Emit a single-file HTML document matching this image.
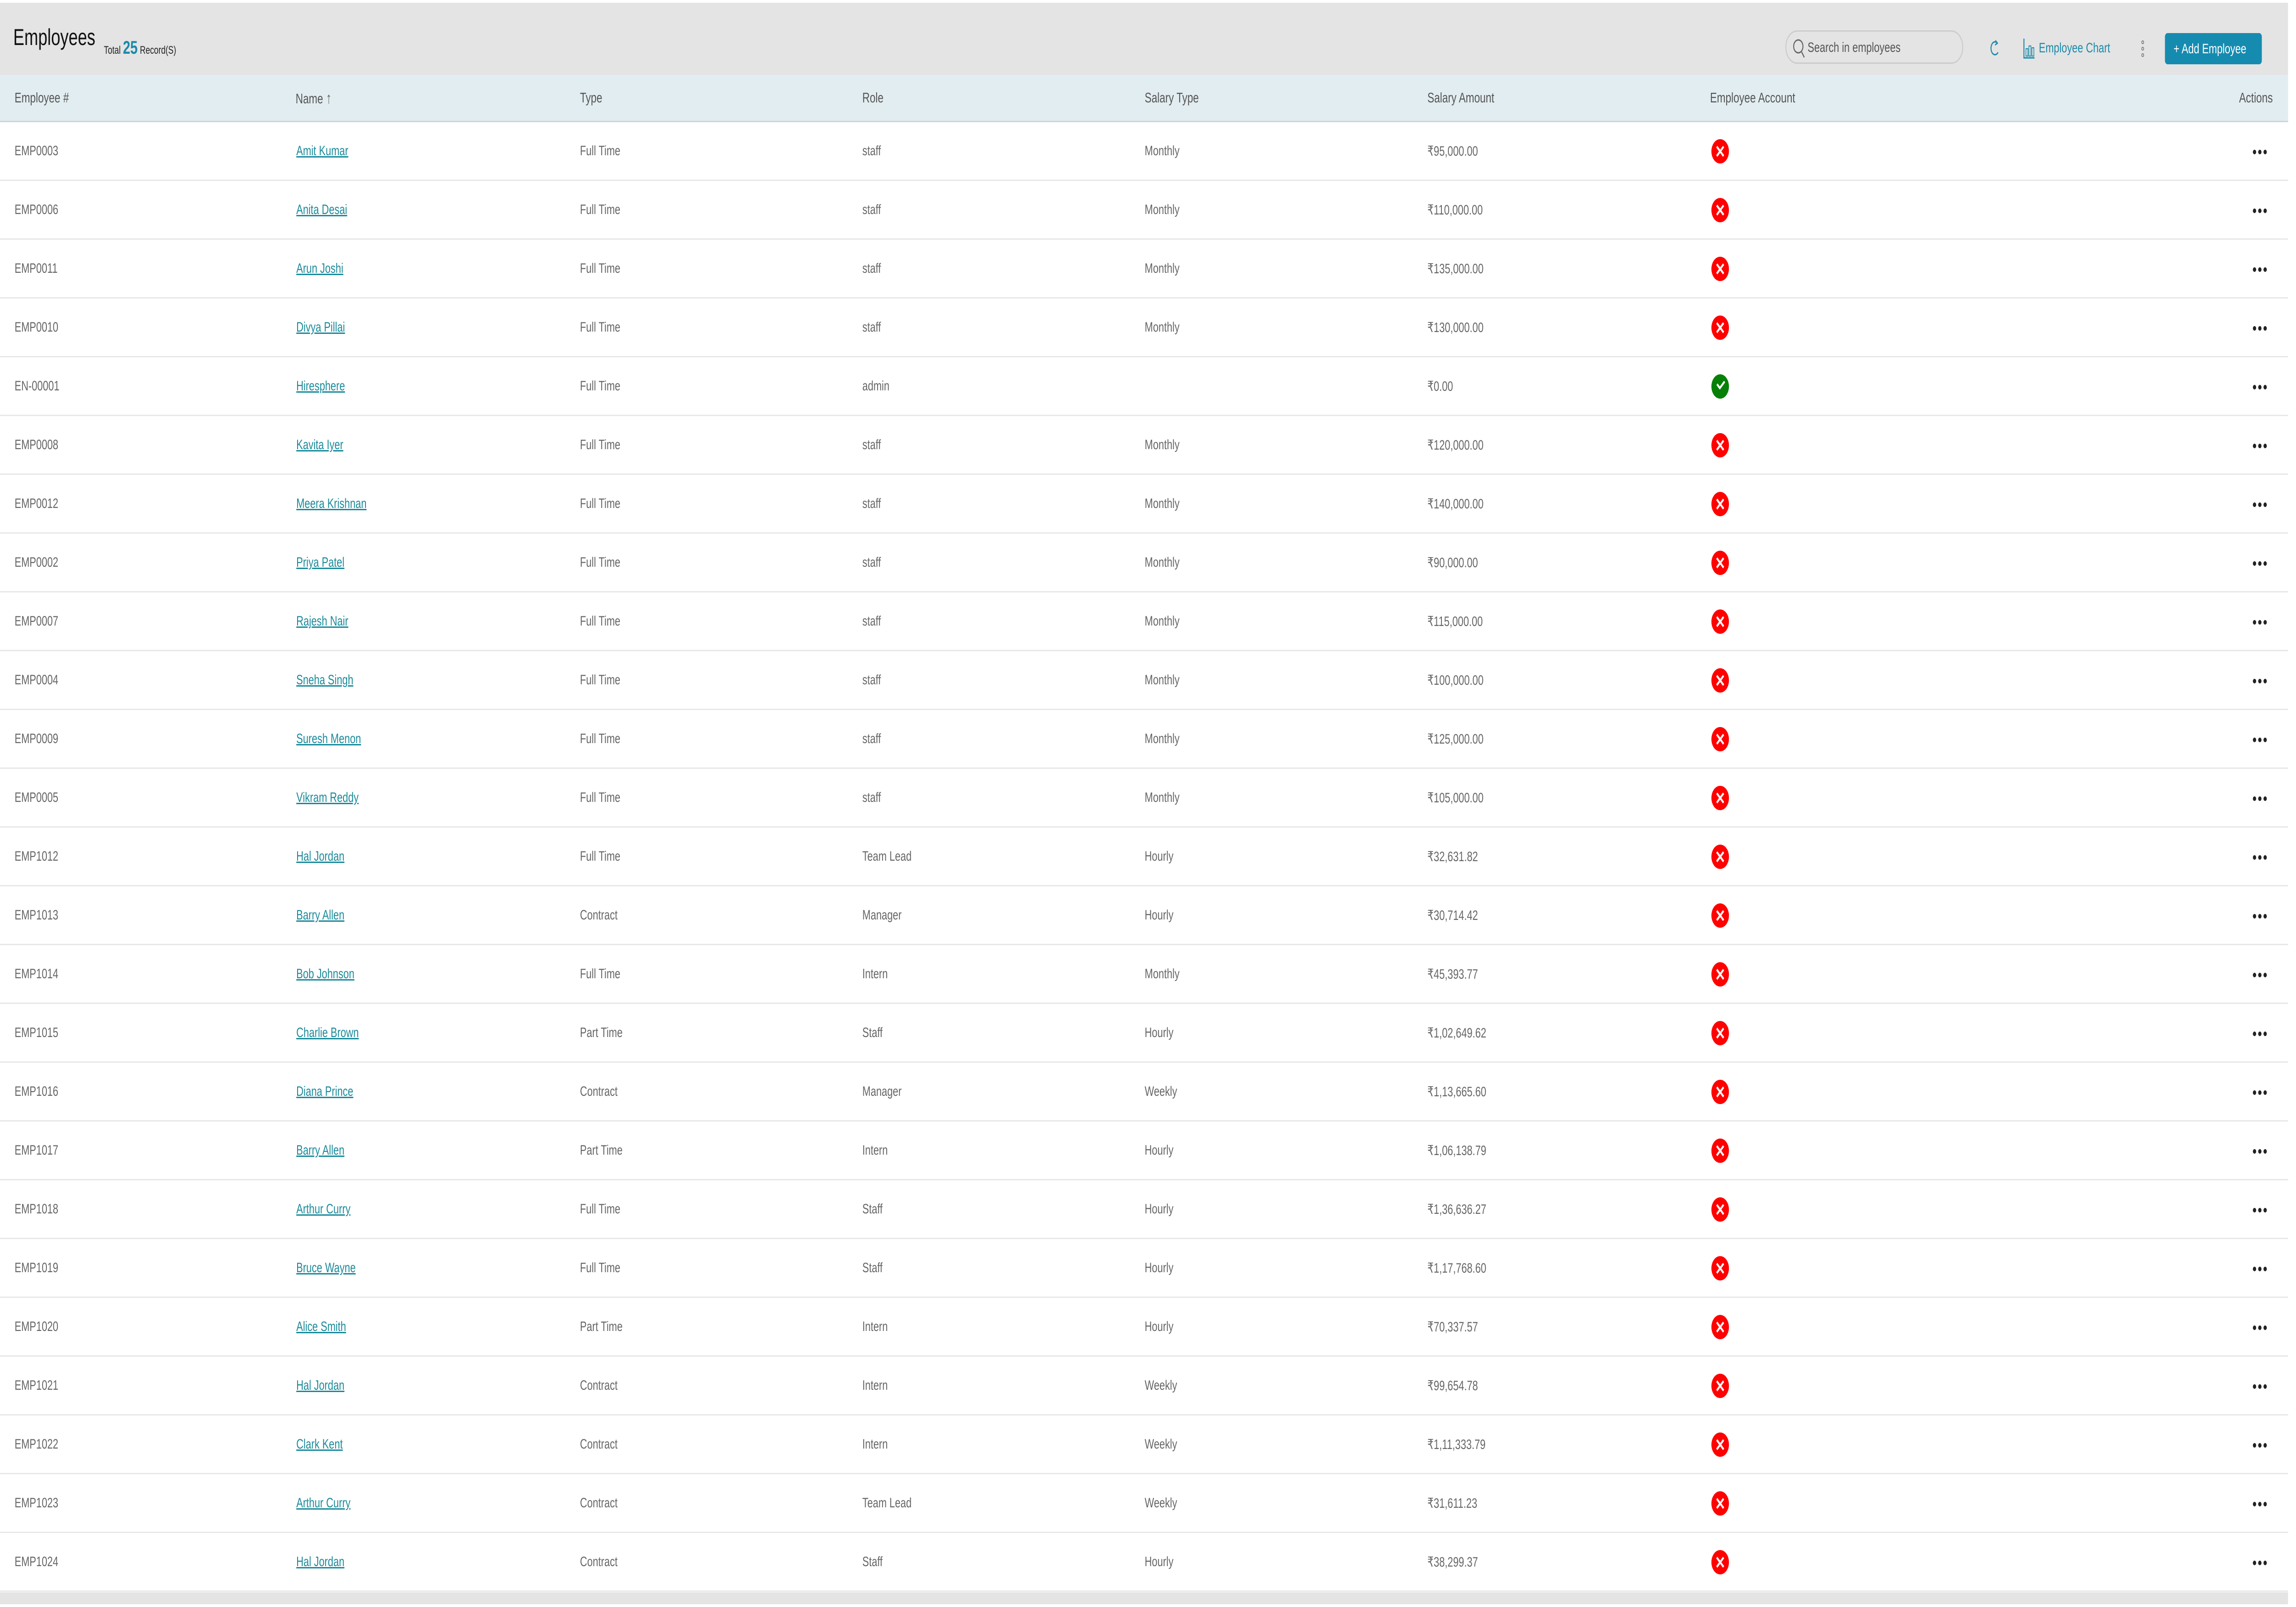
<!DOCTYPE html>
<html><head><meta charset="utf-8"><style>
*{margin:0;padding:0;box-sizing:border-box}
html,body{margin:0;overflow:hidden;background:#fff}
#w{width:6920px;height:3499px;background:#fff;font-family:"Liberation Sans",sans-serif;position:relative;overflow:hidden;transform-origin:0 0}
.hdr{position:absolute;left:0;top:6px;width:6896px;height:157px;background:#e4e4e4}
.title{position:absolute;left:40px;top:46px;font-size:50px;color:#111}
.tot{position:absolute;left:313px;top:76px;font-size:24px;color:#222}
.tot b{font-size:40px;color:#1a8aa8;font-weight:bold}
.search{position:absolute;left:5381px;top:60px;width:536px;height:73px;border:3px solid #ccc;border-radius:36px;font-size:30px;color:#555;padding:18px 0 0 64px}
.btn{position:absolute;left:6525px;top:66px;width:292px;height:68px;background:#168bb0;border-radius:8px;color:#fff;font-size:30px;padding:18px 0 0 26px}
.chart{position:absolute;left:6145px;top:82px;font-size:30px;color:#1a8aa8}
.th{position:absolute;left:0;top:163px;width:6896px;height:103px;background:#e2edf1;border-bottom:3px solid #cdd5da}
.th span{position:absolute;top:32px;font-size:31px;color:#555}
.row{position:absolute;left:0;width:6896px;height:128px;border-bottom:3px solid #e8e8e8;background:#fff}
.row span{position:absolute;top:46px;font-size:30px;color:#666}
.row .n{color:#1a8a9a;text-decoration:underline}
.x{position:absolute;left:5158px;top:37px;width:53px;height:53px;border-radius:50%;background:#f00}
.x:before,.x:after{content:"";position:absolute;left:24px;top:12px;width:5px;height:29px;background:#fff;transform:rotate(45deg)}
.x:after{transform:rotate(-45deg)}
.ok{background:#078007}
.ok:before{left:15px;top:24px;width:14px;height:5px;transform:rotate(45deg)}
.ok:after{left:21px;top:21px;width:22px;height:5px;transform:rotate(-45deg)}
.d{position:absolute;left:6790px;top:60px;width:42px;height:10px}
.d i{position:absolute;top:0;width:10px;height:10px;border-radius:50%;background:#222}
.foot{position:absolute;left:0;top:3467px;width:6896px;height:26px;background:#e4e4e4}
</style></head><body>
<div id="w">
<div class="hdr">
<div class="title">Employees</div>
<div class="tot">Total <b>25</b> Record(S)</div>
<div class="search"><svg style="position:absolute;left:18px;top:14px" width="40" height="46" viewBox="0 0 40 46"><circle cx="18" cy="18" r="14" fill="none" stroke="#666" stroke-width="3"/><line x1="28" y1="30" x2="36" y2="42" stroke="#666" stroke-width="3"/></svg>Search in employees</div>
<svg style="position:absolute;left:5998px;top:78px" width="30" height="44" viewBox="0 0 30 44"><path d="M22 10 A12 14 0 1 0 24 30" fill="none" stroke="#1a8aa8" stroke-width="3"/><path d="M16 4 L22 10 L15 14" fill="none" stroke="#1a8aa8" stroke-width="3"/></svg>
<svg style="position:absolute;left:6098px;top:78px" width="36" height="44" viewBox="0 0 36 44"><path d="M2 0 V42 H34" fill="none" stroke="#1a8aa8" stroke-width="3"/><rect x="8" y="22" width="6" height="16" fill="none" stroke="#1a8aa8" stroke-width="2"/><rect x="17" y="16" width="6" height="22" fill="none" stroke="#1a8aa8" stroke-width="2"/><rect x="26" y="20" width="6" height="18" fill="none" stroke="#1a8aa8" stroke-width="2"/></svg>
<div class="chart">Employee Chart</div>
<svg style="position:absolute;left:6452px;top:80px" width="12" height="40" viewBox="0 0 12 40"><circle cx="6" cy="6" r="3" fill="none" stroke="#777" stroke-width="2"/><circle cx="6" cy="20" r="3" fill="none" stroke="#777" stroke-width="2"/><circle cx="6" cy="34" r="3" fill="none" stroke="#777" stroke-width="2"/></svg>
<div class="btn">+ Add Employee</div>
</div>
<div class="th">
<span style="left:44px">Employee #</span>
<span style="left:891px">Name <b style="font-size:34px;color:#666">&#8593;</b></span>
<span style="left:1748px">Type</span>
<span style="left:2599px">Role</span>
<span style="left:3450px">Salary Type</span>
<span style="left:4302px">Salary Amount</span>
<span style="left:5154px">Employee Account</span>
<span style="right:46px">Actions</span>
</div>

<div class="row" style="top:266px"><span style="left:44px">EMP0003</span><span class="n" style="left:893px">Amit Kumar</span><span style="left:1748px">Full Time</span><span style="left:2599px">staff</span><span style="left:3450px">Monthly</span><span style="left:4302px">₹95,000.00</span><div class="x"></div><div class="d"><i style="left:0"></i><i style="left:16px"></i><i style="left:32px"></i></div></div>
<div class="row" style="top:394px"><span style="left:44px">EMP0006</span><span class="n" style="left:893px">Anita Desai</span><span style="left:1748px">Full Time</span><span style="left:2599px">staff</span><span style="left:3450px">Monthly</span><span style="left:4302px">₹110,000.00</span><div class="x"></div><div class="d"><i style="left:0"></i><i style="left:16px"></i><i style="left:32px"></i></div></div>
<div class="row" style="top:522px"><span style="left:44px">EMP0011</span><span class="n" style="left:893px">Arun Joshi</span><span style="left:1748px">Full Time</span><span style="left:2599px">staff</span><span style="left:3450px">Monthly</span><span style="left:4302px">₹135,000.00</span><div class="x"></div><div class="d"><i style="left:0"></i><i style="left:16px"></i><i style="left:32px"></i></div></div>
<div class="row" style="top:650px"><span style="left:44px">EMP0010</span><span class="n" style="left:893px">Divya Pillai</span><span style="left:1748px">Full Time</span><span style="left:2599px">staff</span><span style="left:3450px">Monthly</span><span style="left:4302px">₹130,000.00</span><div class="x"></div><div class="d"><i style="left:0"></i><i style="left:16px"></i><i style="left:32px"></i></div></div>
<div class="row" style="top:778px"><span style="left:44px">EN-00001</span><span class="n" style="left:893px">Hiresphere</span><span style="left:1748px">Full Time</span><span style="left:2599px">admin</span><span style="left:3450px"></span><span style="left:4302px">₹0.00</span><div class="x ok"></div><div class="d"><i style="left:0"></i><i style="left:16px"></i><i style="left:32px"></i></div></div>
<div class="row" style="top:906px"><span style="left:44px">EMP0008</span><span class="n" style="left:893px">Kavita Iyer</span><span style="left:1748px">Full Time</span><span style="left:2599px">staff</span><span style="left:3450px">Monthly</span><span style="left:4302px">₹120,000.00</span><div class="x"></div><div class="d"><i style="left:0"></i><i style="left:16px"></i><i style="left:32px"></i></div></div>
<div class="row" style="top:1034px"><span style="left:44px">EMP0012</span><span class="n" style="left:893px">Meera Krishnan</span><span style="left:1748px">Full Time</span><span style="left:2599px">staff</span><span style="left:3450px">Monthly</span><span style="left:4302px">₹140,000.00</span><div class="x"></div><div class="d"><i style="left:0"></i><i style="left:16px"></i><i style="left:32px"></i></div></div>
<div class="row" style="top:1162px"><span style="left:44px">EMP0002</span><span class="n" style="left:893px">Priya Patel</span><span style="left:1748px">Full Time</span><span style="left:2599px">staff</span><span style="left:3450px">Monthly</span><span style="left:4302px">₹90,000.00</span><div class="x"></div><div class="d"><i style="left:0"></i><i style="left:16px"></i><i style="left:32px"></i></div></div>
<div class="row" style="top:1290px"><span style="left:44px">EMP0007</span><span class="n" style="left:893px">Rajesh Nair</span><span style="left:1748px">Full Time</span><span style="left:2599px">staff</span><span style="left:3450px">Monthly</span><span style="left:4302px">₹115,000.00</span><div class="x"></div><div class="d"><i style="left:0"></i><i style="left:16px"></i><i style="left:32px"></i></div></div>
<div class="row" style="top:1418px"><span style="left:44px">EMP0004</span><span class="n" style="left:893px">Sneha Singh</span><span style="left:1748px">Full Time</span><span style="left:2599px">staff</span><span style="left:3450px">Monthly</span><span style="left:4302px">₹100,000.00</span><div class="x"></div><div class="d"><i style="left:0"></i><i style="left:16px"></i><i style="left:32px"></i></div></div>
<div class="row" style="top:1546px"><span style="left:44px">EMP0009</span><span class="n" style="left:893px">Suresh Menon</span><span style="left:1748px">Full Time</span><span style="left:2599px">staff</span><span style="left:3450px">Monthly</span><span style="left:4302px">₹125,000.00</span><div class="x"></div><div class="d"><i style="left:0"></i><i style="left:16px"></i><i style="left:32px"></i></div></div>
<div class="row" style="top:1674px"><span style="left:44px">EMP0005</span><span class="n" style="left:893px">Vikram Reddy</span><span style="left:1748px">Full Time</span><span style="left:2599px">staff</span><span style="left:3450px">Monthly</span><span style="left:4302px">₹105,000.00</span><div class="x"></div><div class="d"><i style="left:0"></i><i style="left:16px"></i><i style="left:32px"></i></div></div>
<div class="row" style="top:1802px"><span style="left:44px">EMP1012</span><span class="n" style="left:893px">Hal Jordan</span><span style="left:1748px">Full Time</span><span style="left:2599px">Team Lead</span><span style="left:3450px">Hourly</span><span style="left:4302px">₹32,631.82</span><div class="x"></div><div class="d"><i style="left:0"></i><i style="left:16px"></i><i style="left:32px"></i></div></div>
<div class="row" style="top:1930px"><span style="left:44px">EMP1013</span><span class="n" style="left:893px">Barry Allen</span><span style="left:1748px">Contract</span><span style="left:2599px">Manager</span><span style="left:3450px">Hourly</span><span style="left:4302px">₹30,714.42</span><div class="x"></div><div class="d"><i style="left:0"></i><i style="left:16px"></i><i style="left:32px"></i></div></div>
<div class="row" style="top:2058px"><span style="left:44px">EMP1014</span><span class="n" style="left:893px">Bob Johnson</span><span style="left:1748px">Full Time</span><span style="left:2599px">Intern</span><span style="left:3450px">Monthly</span><span style="left:4302px">₹45,393.77</span><div class="x"></div><div class="d"><i style="left:0"></i><i style="left:16px"></i><i style="left:32px"></i></div></div>
<div class="row" style="top:2186px"><span style="left:44px">EMP1015</span><span class="n" style="left:893px">Charlie Brown</span><span style="left:1748px">Part Time</span><span style="left:2599px">Staff</span><span style="left:3450px">Hourly</span><span style="left:4302px">₹1,02,649.62</span><div class="x"></div><div class="d"><i style="left:0"></i><i style="left:16px"></i><i style="left:32px"></i></div></div>
<div class="row" style="top:2314px"><span style="left:44px">EMP1016</span><span class="n" style="left:893px">Diana Prince</span><span style="left:1748px">Contract</span><span style="left:2599px">Manager</span><span style="left:3450px">Weekly</span><span style="left:4302px">₹1,13,665.60</span><div class="x"></div><div class="d"><i style="left:0"></i><i style="left:16px"></i><i style="left:32px"></i></div></div>
<div class="row" style="top:2442px"><span style="left:44px">EMP1017</span><span class="n" style="left:893px">Barry Allen</span><span style="left:1748px">Part Time</span><span style="left:2599px">Intern</span><span style="left:3450px">Hourly</span><span style="left:4302px">₹1,06,138.79</span><div class="x"></div><div class="d"><i style="left:0"></i><i style="left:16px"></i><i style="left:32px"></i></div></div>
<div class="row" style="top:2570px"><span style="left:44px">EMP1018</span><span class="n" style="left:893px">Arthur Curry</span><span style="left:1748px">Full Time</span><span style="left:2599px">Staff</span><span style="left:3450px">Hourly</span><span style="left:4302px">₹1,36,636.27</span><div class="x"></div><div class="d"><i style="left:0"></i><i style="left:16px"></i><i style="left:32px"></i></div></div>
<div class="row" style="top:2698px"><span style="left:44px">EMP1019</span><span class="n" style="left:893px">Bruce Wayne</span><span style="left:1748px">Full Time</span><span style="left:2599px">Staff</span><span style="left:3450px">Hourly</span><span style="left:4302px">₹1,17,768.60</span><div class="x"></div><div class="d"><i style="left:0"></i><i style="left:16px"></i><i style="left:32px"></i></div></div>
<div class="row" style="top:2826px"><span style="left:44px">EMP1020</span><span class="n" style="left:893px">Alice Smith</span><span style="left:1748px">Part Time</span><span style="left:2599px">Intern</span><span style="left:3450px">Hourly</span><span style="left:4302px">₹70,337.57</span><div class="x"></div><div class="d"><i style="left:0"></i><i style="left:16px"></i><i style="left:32px"></i></div></div>
<div class="row" style="top:2954px"><span style="left:44px">EMP1021</span><span class="n" style="left:893px">Hal Jordan</span><span style="left:1748px">Contract</span><span style="left:2599px">Intern</span><span style="left:3450px">Weekly</span><span style="left:4302px">₹99,654.78</span><div class="x"></div><div class="d"><i style="left:0"></i><i style="left:16px"></i><i style="left:32px"></i></div></div>
<div class="row" style="top:3082px"><span style="left:44px">EMP1022</span><span class="n" style="left:893px">Clark Kent</span><span style="left:1748px">Contract</span><span style="left:2599px">Intern</span><span style="left:3450px">Weekly</span><span style="left:4302px">₹1,11,333.79</span><div class="x"></div><div class="d"><i style="left:0"></i><i style="left:16px"></i><i style="left:32px"></i></div></div>
<div class="row" style="top:3210px"><span style="left:44px">EMP1023</span><span class="n" style="left:893px">Arthur Curry</span><span style="left:1748px">Contract</span><span style="left:2599px">Team Lead</span><span style="left:3450px">Weekly</span><span style="left:4302px">₹31,611.23</span><div class="x"></div><div class="d"><i style="left:0"></i><i style="left:16px"></i><i style="left:32px"></i></div></div>
<div class="row" style="top:3338px"><span style="left:44px">EMP1024</span><span class="n" style="left:893px">Hal Jordan</span><span style="left:1748px">Contract</span><span style="left:2599px">Staff</span><span style="left:3450px">Hourly</span><span style="left:4302px">₹38,299.37</span><div class="x"></div><div class="d"><i style="left:0"></i><i style="left:16px"></i><i style="left:32px"></i></div></div>
<div class="foot"></div>
</div>
<script>
(function(){var sx=window.innerWidth/6920,sy=window.innerHeight/3499;if(Math.abs(sx-1)>0.001||Math.abs(sy-1)>0.001){var w=document.getElementById('w');w.style.transform='scale('+sx+','+sy+')';document.body.style.height=(3499*sy)+'px';document.body.style.width=(6920*sx)+'px';}})();
</script>
</body></html>
